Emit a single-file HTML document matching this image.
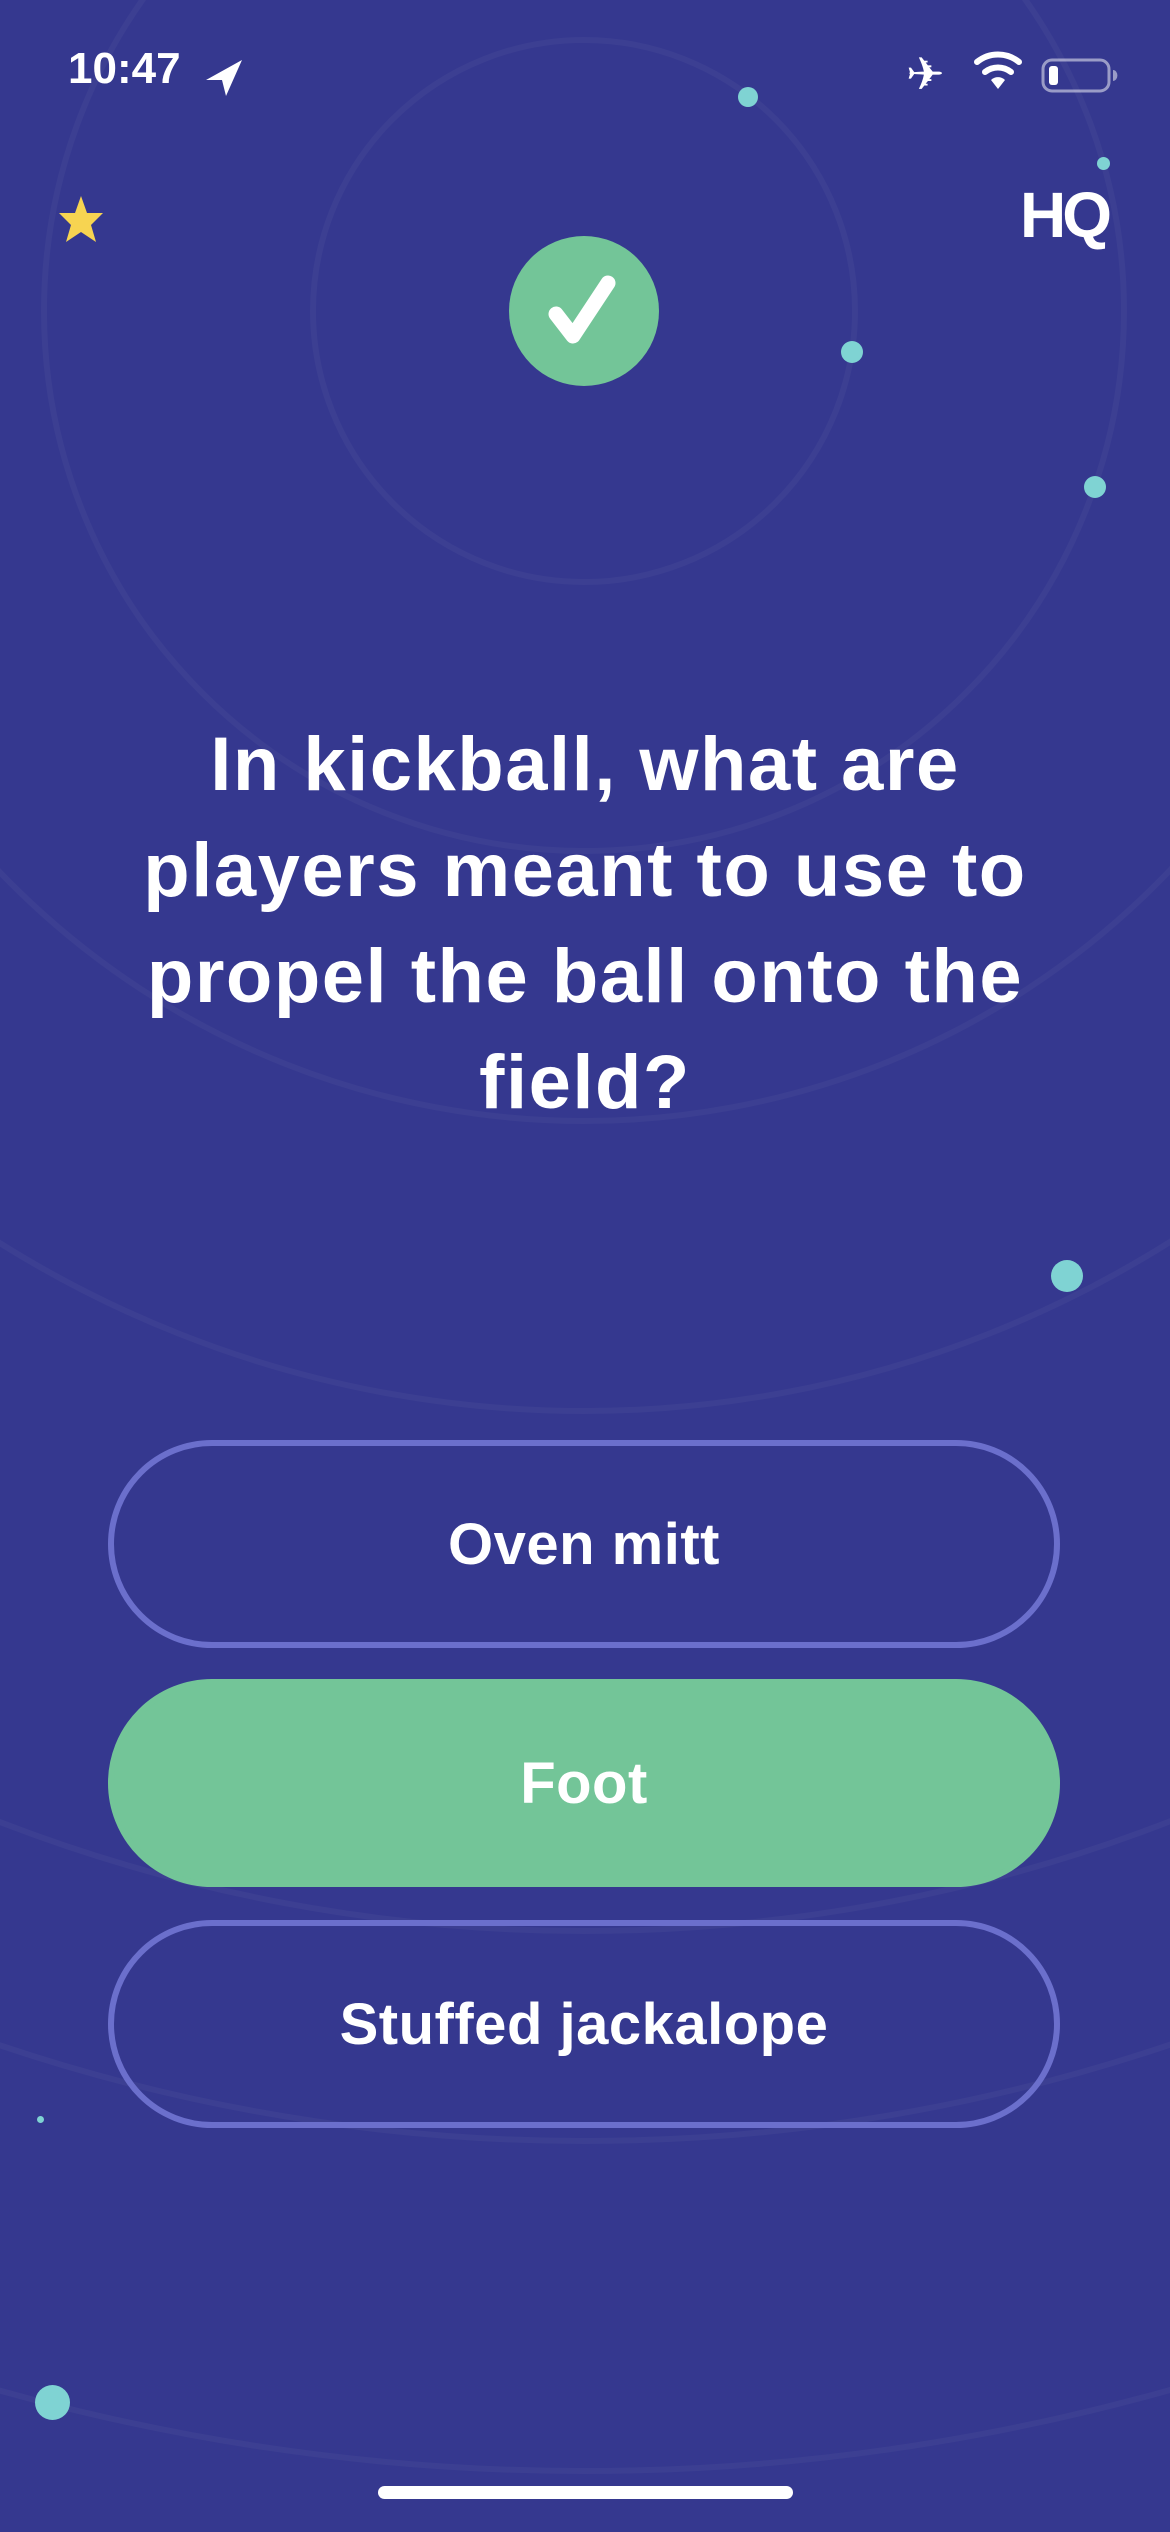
<!DOCTYPE html>
<html><head><meta charset="utf-8"><style>
*{margin:0;padding:0;box-sizing:border-box}
body{width:1170px;height:2532px;background:#35388f;position:relative;overflow:hidden;font-family:"Liberation Sans",sans-serif;color:#fff}
.abs{position:absolute}
.q{position:absolute;left:0;width:1170px;top:712px;text-align:center;font-size:76px;font-weight:bold;line-height:106px;letter-spacing:1.5px}
.btn{position:absolute;left:108px;width:952px;height:208px;border-radius:104px;border:6px solid #6b6fcc;display:flex;align-items:center;justify-content:center;font-size:58px;font-weight:bold;letter-spacing:0.5px}
.dot{position:absolute;background:#7fd3d3;border-radius:50%}
</style></head><body>
<svg class="abs" style="left:0;top:0" width="1170" height="2532">
<g fill="none" stroke="#ffffff" stroke-opacity="0.035" stroke-width="6">
<circle cx="584" cy="311" r="271"/>
<circle cx="584" cy="311" r="540"/>
<circle cx="584" cy="311" r="810"/>
<circle cx="584" cy="311" r="1100"/>
<circle cx="584" cy="311" r="1620"/>
<circle cx="584" cy="311" r="1830"/>
<circle cx="584" cy="311" r="2160"/>
</g>
<circle cx="584" cy="311" r="75" fill="#73c598"/>
<path d="M556 314 L573 336 L608 283" fill="none" stroke="#fff" stroke-width="15" stroke-linecap="round" stroke-linejoin="round"/>
<path d="M81 196 L87 213 L103 213 L91 225 L96 242 L81 232 L66 242 L71 225 L59 213 L75 213Z" fill="#f7d451"/>
<g fill="none" stroke="#fff" stroke-width="6" stroke-linecap="round">
<path d="M977 62 A33 33 0 0 1 1019 62"/>
<path d="M985 72 A21 21 0 0 1 1011 72"/>
</g>
<path d="M991 80 L998 89 L1005 80 A10 10 0 0 0 991 80Z" fill="#fff"/>
<rect x="1043" y="60" width="66" height="31" rx="9" fill="none" stroke="#fff" stroke-opacity="0.5" stroke-width="3"/>
<rect x="1049" y="66" width="9" height="19" rx="3" fill="#fff"/>
<path d="M1113 70 a4 5 0 0 1 0 11z" fill="#fff" fill-opacity="0.5"/>
<path d="M206 80 L242 60 L226 96 L222 80 Z" fill="#fff"/>
</svg>
<div class="abs" style="left:906px;top:46px;font-family:'DejaVu Sans',sans-serif;font-size:46px;line-height:56px">✈</div>
<div class="abs" style="left:68px;top:44px;font-size:44px;font-weight:bold">10:47</div>
<div class="abs" style="left:1020px;top:178px;font-size:64px;font-weight:900;letter-spacing:-4px">HQ</div>
<div class="dot" style="left:738px;top:87px;width:20px;height:20px"></div>
<div class="dot" style="left:1097px;top:157px;width:13px;height:13px"></div>
<div class="dot" style="left:841px;top:341px;width:22px;height:22px"></div>
<div class="dot" style="left:1084px;top:476px;width:22px;height:22px"></div>
<div class="dot" style="left:1051px;top:1260px;width:32px;height:32px"></div>
<div class="dot" style="left:37px;top:2116px;width:7px;height:7px"></div>
<div class="dot" style="left:35px;top:2385px;width:35px;height:35px"></div>
<div class="q">In kickball, what are<br>players meant to use to<br>propel the ball onto the<br>field?</div>
<div class="btn" style="top:1440px">Oven mitt</div>
<div class="btn" style="top:1679px;background:#73c598;border-color:#73c598">Foot</div>
<div class="btn" style="top:1920px">Stuffed jackalope</div>
<div class="abs" style="left:378px;top:2486px;width:415px;height:13px;border-radius:7px;background:#fff"></div>
</body></html>
